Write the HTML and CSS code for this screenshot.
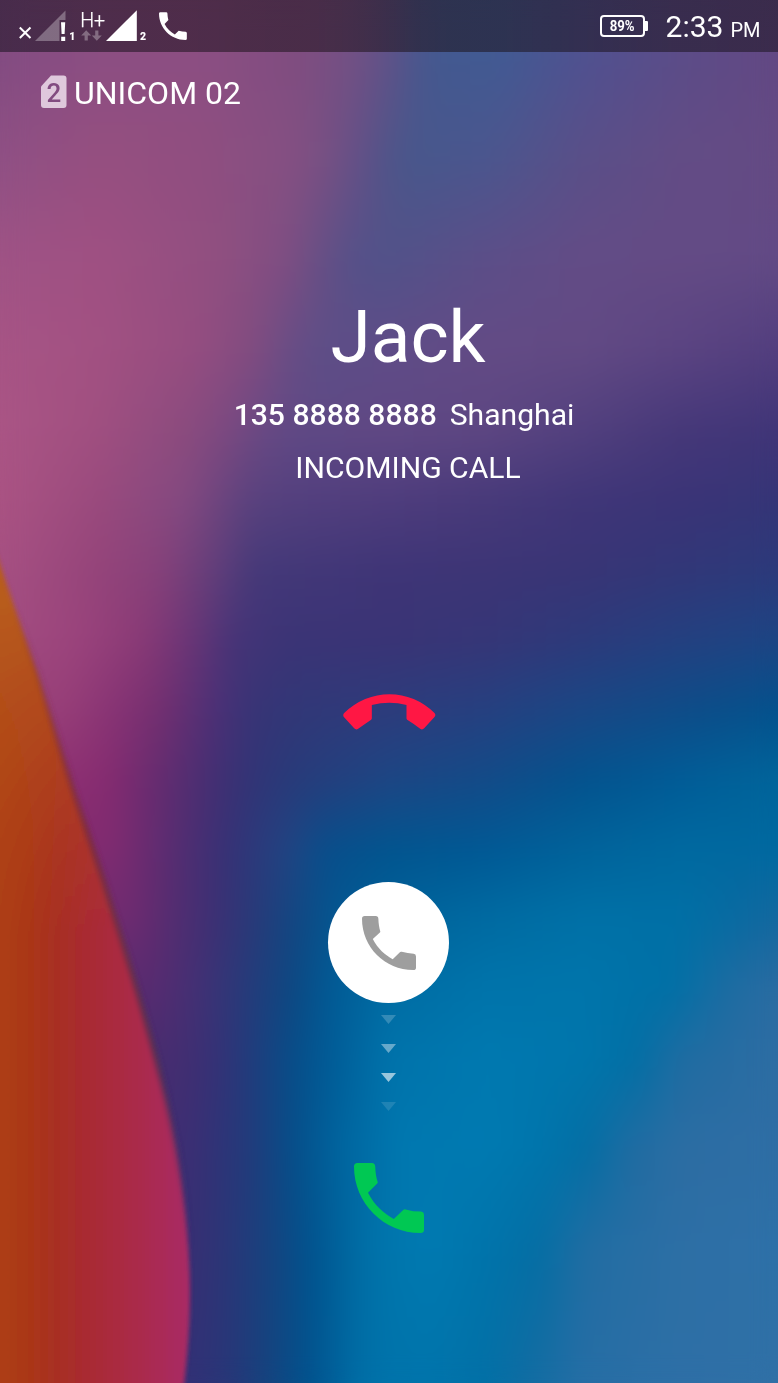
FILE: index.html
```html
<!DOCTYPE html>
<html lang="en">
<head>
<meta charset="utf-8">
<title>Incoming call</title>
<link rel="stylesheet" href="styles.css">
</head>
<body>
<main class="phone">
  <div class="wallpaper" aria-hidden="true">
    <div class="band band-1"></div>
    <div class="band band-2"></div>
    <div class="band band-3"></div>
    <div class="band band-4"></div>
    <div class="band band-5"></div>
    <div class="band band-6"></div>
    <div class="band band-7"></div>
    <div class="band band-8"></div>
    <div class="band band-9"></div>
    <div class="band band-10"></div>
    <div class="band band-11"></div>
    <div class="band band-12"></div>
    <div class="band band-13"></div>
    <div class="band band-14"></div>
    <div class="band band-15"></div>
    <div class="band band-16"></div>
    <div class="band band-17"></div>
    <div class="smooth"></div>
    <svg class="petal" viewBox="0 0 778 1383">
      <defs>
        <linearGradient id="warm" gradientUnits="userSpaceOnUse" x1="0" y1="0" x2="190" y2="0">
          <stop offset="0" stop-color="#ad3e13"/><stop offset=".16" stop-color="#aa3618"/><stop offset=".31" stop-color="#a82e24"/>
          <stop offset=".48" stop-color="#a92b34"/><stop offset=".7" stop-color="#aa2b48"/><stop offset="1" stop-color="#a92b66"/>
        </linearGradient>
        <linearGradient id="glow" gradientUnits="userSpaceOnUse" x1="0" y1="600" x2="40" y2="940">
          <stop offset="0" stop-color="#b85c1c"/><stop offset=".5" stop-color="#b4501c" stop-opacity=".5"/><stop offset="1" stop-color="#b04018" stop-opacity="0"/>
        </linearGradient>
        <linearGradient id="edge" gradientUnits="userSpaceOnUse" x1="0" y1="600" x2="0" y2="1250">
          <stop offset="0" stop-color="#7a3438" stop-opacity="0"/><stop offset=".35" stop-color="#7a2c38" stop-opacity=".65"/>
          <stop offset=".7" stop-color="#55304e" stop-opacity=".65"/><stop offset="1" stop-color="#40306a" stop-opacity="0"/>
        </linearGradient>
        <filter id="soft" x="-20%" y="-5%" width="140%" height="110%"><feGaussianBlur stdDeviation="2"/></filter>
      </defs>
      <g filter="url(#soft)">
        <path fill="url(#warm)" d="M-20 510L0 565Q15 610 37 673L72 787L103 880C125 950 150 1030 167 1103C180 1160 190 1230 190 1293Q190 1340 182 1403H-20Z"/>
        <path fill="url(#glow)" d="M-20 510L0 565Q15 610 37 673L72 787L103 880C125 950 150 1030 167 1103C180 1160 190 1230 190 1293Q190 1340 182 1403H-20Z"/>
        <path fill="none" stroke="url(#edge)" stroke-width="7" d="M0 565Q15 610 37 673L72 787L103 880C125 950 150 1030 167 1103C180 1160 190 1230 190 1293"/>
      </g>
    </svg>
  </div>

  <header class="status-bar">
    <svg class="signals" viewBox="0 0 200 52">
      <path class="cross" d="M19.8 27.5L30.5 38M30.5 27.5L19.8 38"/>
      <path class="dim" d="M35 41L65.5 10.5V20H59.5V41Z"/>
      <path class="solid" d="M61 22.3h4.2l-.6 11.7h-3zM61.2 36.8h4v4.2h-4z"/>
      <text class="slot" x="69.3" y="40.4">1</text>
      <text class="net" x="80.2" y="27.4">H+</text>
      <path class="dim" d="M86.2 30.2l5 5.2h-3.4v5.2h-3.2v-5.2h-3.4zM96.8 40.8l-5-5.2h3.4v-5.2h3.2v5.2h3.4z"/>
      <path class="solid" d="M106 41L136.8 10.3V41Z"/>
      <text class="slot" x="140" y="40.4">2</text>
      <path class="solid" transform="translate(159 12.2) scale(.174)" d="M0 8Q0 0 8 0H41Q48 0 48.5 8C49 22 51 35 54 45L32 68C47 97 68 115 91 128L113 106Q135 112 153 112Q160 113 160 120V153Q160 160 152 160C68 160 0 92 0 8Z"/>
    </svg>
    <div class="status-right">
      <div class="battery"><span class="battery-text">89%</span></div>
      <div class="clock">2:33<span class="meridiem">PM</span></div>
    </div>
  </header>

  <div class="carrier">
    <svg class="sim" viewBox="0 0 26 34"><path d="M10 .5H22.5Q25.5 .5 25.5 3.5V30Q25.5 33 22.5 33H3Q0 33 0 30V11.5Z"/><text x="13" y="27">2</text></svg>
    <span class="carrier-name">UNICOM 02</span>
  </div>

  <section class="caller">
    <h1 class="name">Jack</h1>
    <p class="number-row"><span class="number">135 8888 8888</span><span class="place">Shanghai</span></p>
    <p class="state">INCOMING CALL</p>
  </section>

  <section class="actions">
    <svg class="decline" viewBox="69 71 278 108"><path d="M72 128Q132 72 208 72Q284 72 343 128Q348 134 343 140L312 174Q306 180 300 175Q282 161 261 148Q259 147 259 144V104Q208 90 155 104V144Q155 147 153 148Q134 161 114 175Q108 180 102 174L71 140Q67 134 72 128Z"/></svg>
    <div class="handle">
      <svg class="handle-icon" viewBox="0 0 160 160"><path d="M0 8Q0 0 8 0H41Q48 0 48.5 8C49 22 51 35 54 45Q55 47 53 49L32 68C47 97 68 115 91 128L113 107Q115 105 118 106Q135 111 153 112Q160 113 160 120V153Q160 160 152 160C68 160 0 92 0 8Z"/></svg>
    </div>
    <div class="arrows">
      <i class="arrow arrow-a"></i><i class="arrow arrow-b"></i><i class="arrow arrow-c"></i><i class="arrow arrow-d"></i>
    </div>
    <svg class="answer" viewBox="0 0 160 160"><path d="M0 8Q0 0 8 0H41Q48 0 48.5 8C49 22 51 35 54 43Q55 45 53 47L32 68C47 97 68 115 91 128L113 107Q115 105 118 106Q135 111 153 111Q160 112 160 119V153Q160 160 152 160C68 160 0 92 0 8Z"/></svg>
  </section>
</main>
</body>
</html>
```

FILE: styles.css
```css
* { box-sizing: border-box; }
body { margin: 0; font-family: Roboto, sans-serif; color: #fff; }
.phone { position: relative; width: 778px; height: 1383px; overflow: hidden; isolation: isolate; }

/* Wallpaper: each band fades in over the one above it. */
.wallpaper { position: absolute; inset: 0; z-index: -1; }
.band { position: absolute; left: 0; right: 0; bottom: 0; top: var(--y); -webkit-mask-image: linear-gradient(transparent, #000 var(--h)); mask-image: linear-gradient(transparent, #000 var(--h)); }
.band-1 { top: 0; -webkit-mask-image: none; mask-image: none; background: linear-gradient(90deg, #834c82 0, #8c4e82 100px, #8c4e82 200px, #7f4d80 300px, #735084 350px, #5f5288 389px, #4b568d 415px, #435990 440px, #425a93 500px, #505190 583px, #5c4c88 680px, #634883 778px); }
.band-2 { --y: 60px; --h: 100px; background: linear-gradient(90deg, #8f5084 0, #964f80 100px, #904e80 200px, #845082 292px, #775083 325px, #625087 360px, #4f5589 389px, #48578c 415px, #4b568e 486px, #5a4f88 583px, #634c85 680px, #654b84 778px); }
.band-3 { --y: 160px; --h: 100px; background: linear-gradient(90deg, #9f5385 0, #9f5082 100px, #904f80 220px, #7f4e82 285px, #664f85 322px, #555189 355px, #525289 389px, #5c4e88 486px, #634c86 583px, #644b85 680px, #624a85 778px); }
.band-4 { --y: 260px; --h: 90px; background: linear-gradient(90deg, #a75485 0, #a25182 97px, #954d80 194px, #804c80 255px, #684d85 290px, #5d4e87 325px, #5f4c87 389px, #634b85 486px, #624a84 583px, #5b4482 680px, #523e7e 778px); }
.band-5 { --y: 350px; --h: 80px; background: linear-gradient(90deg, #aa5585 0, #a04f80 97px, #8b4b7e 185px, #7c4980 225px, #674984 265px, #5f4985 300px, #604884 389px, #5d4682 486px, #52407e 583px, #463879 680px, #403578 778px); }
.band-6 { --y: 430px; --h: 70px; background: linear-gradient(90deg, #aa5383 0, #9a4a7d 97px, #834980 185px, #70457e 215px, #5a427e 250px, #54407e 292px, #4f3d7d 389px, #483a7a 486px, #403678 583px, #3b3477 680px, #353577 778px); }
.band-7 { --y: 500px; --h: 70px; background: linear-gradient(90deg, #a65082 0, #95447a 97px, #86417a 160px, #623e7a 215px, #453979 255px, #3f3577 389px, #3d3576 486px, #393576 583px, #323778 680px, #2c3a7b 778px); }
.band-8 { --y: 570px; --h: 70px; background: linear-gradient(90deg, #a34d80 0, #9a437c 80px, #8a3a76 140px, #6e3576 185px, #453477 235px, #3b3476 292px, #3a3476 389px, #363677 486px, #2d3a7b 583px, #244080 680px, #1d4584 778px); }
.band-9 { --y: 640px; --h: 70px; background: linear-gradient(90deg, #983f78 60px, #873374 115px, #732f70 160px, #4c3076 215px, #383476 252px, #323777 292px, #2d3c7c 389px, #264080 486px, #1a4785 583px, #0f4c88 680px, #04528d 778px); }
.band-10 { --y: 710px; --h: 70px; background: linear-gradient(90deg, #8c2f72 80px, #842b70 110px, #642c70 160px, #432f73 215px, #323476 250px, #283b7a 292px, #1d4684 389px, #134b88 486px, #04538e 583px, #015c97 680px, #01659b 778px); }
.band-11 { --y: 780px; --h: 70px; background: linear-gradient(90deg, #812b70 110px, #6d2b70 140px, #4c2e72 190px, #353276 230px, #1f4583 292px, #094e8b 324px, #02558f 389px, #015995 486px, #01639b 583px, #0069a0 680px, #0069a0 778px); }
.band-12 { --y: 850px; --h: 70px; background: linear-gradient(90deg, #6f2b70 130px, #5b2c70 160px, #3c3074 215px, #253c7a 260px, #104984 300px, #035892 340px, #00639b 400px, #006ba2 486px, #0071a7 583px, #0070a6 680px, #0a6aa1 740px, #16689f 778px); }
.band-13 { --y: 920px; --h: 70px; background: linear-gradient(90deg, #582b70 150px, #443074 194px, #2a3979 240px, #0d4882 292px, #025a95 330px, #016da4 389px, #0074ab 486px, #0075ab 583px, #0070a6 670px, #1c6ca2 725px, #2c6ca2 778px); }
.band-14 { --y: 990px; --h: 70px; background: linear-gradient(90deg, #472d70 170px, #363176 215px, #213c7c 250px, #084d88 292px, #015c97 330px, #0073ab 389px, #0079b0 486px, #0076ac 583px, #026fa5 635px, #206ca2 682px, #2e6da3 778px); }
.band-15 { --y: 1060px; --h: 90px; background: linear-gradient(90deg, #3e2e73 185px, #303377 215px, #223b7b 250px, #064e89 292px, #00659f 340px, #0078b0 400px, #007ab1 486px, #0075ac 540px, #046ea4 588px, #1f6ca2 630px, #2c6da3 680px, #2f6ea5 778px); }
.band-16 { --y: 1150px; --h: 100px; background: linear-gradient(90deg, #382f73 190px, #293778 230px, #16437f 270px, #01538e 310px, #006da5 360px, #0076ad 389px, #007ab1 430px, #0074ab 486px, #056ea4 540px, #226da3 588px, #2d6fa5 680px, #2e71a8 778px); }
.band-17 { --y: 1250px; --h: 133px; background: linear-gradient(90deg, #323176 190px, #273778 230px, #14447f 270px, #01538e 310px, #006ea6 360px, #0073aa 389px, #0074ab 430px, #0270a6 486px, #126ca2 530px, #266ea5 583px, #2e6fa6 680px, #3070a6 778px); }
.smooth { position: absolute; inset: 0; backdrop-filter: blur(12px); }
.petal { position: absolute; inset: 0; width: 778px; height: 1383px; }

.status-bar { display: flex; justify-content: space-between; height: 52px; background: linear-gradient(90deg, rgba(20, 16, 28, .53), rgba(28, 16, 22, .53) 50%, rgba(24, 18, 28, .53)); }
.signals { display: block; width: 200px; height: 52px; }
.cross { fill: none; stroke: #fff; stroke-width: 2; }
.solid { fill: #fff; }
.dim { fill: #fff; opacity: .3; }
.slot { font: 900 10.5px Roboto, sans-serif; fill: #fff; }
.net { font: 300 19.5px Roboto, sans-serif; fill: #fff; stroke: #fff; stroke-width: .25px; }
.status-right { display: flex; align-items: center; padding-right: 17.5px; }
.battery { position: relative; display: flex; align-items: center; justify-content: center; width: 45px; height: 22px; border: 2px solid #fff; border-radius: 4px; margin-right: 21px; }
.battery::after { content: ""; position: absolute; right: -5px; top: 4px; width: 3px; height: 10px; background: #fff; border-radius: 0 1px 1px 0; }
.battery-text { font-size: 15px; font-weight: 700; line-height: 18px; transform: scaleX(.88); }
.clock { display: flex; align-items: baseline; font-size: 30px; line-height: 50px; padding-top: 4px; }
.meridiem { font-size: 20px; margin-left: 7px; }

.carrier { display: flex; align-items: center; height: 36px; margin: 23px 0 0 41px; }
.sim { width: 26px; height: 34px; margin: 0 7px 3px 0; }
.sim path { fill: #dfc8dc; }
.sim text { font: 500 26px Roboto, sans-serif; text-anchor: middle; fill: #824b80; }
.carrier-name { font-size: 32px; line-height: 36px; }

.caller { display: flex; flex-direction: column; align-items: center; margin-top: 186px; padding-left: 38px; }
.name { margin: 0; font-size: 73px; font-weight: 400; line-height: 80px; }
.number-row { display: flex; margin: 18px 8px 0 0; font-size: 30.1px; line-height: 40px; }
.number { font-weight: 500; }
.place { margin-left: 13px; }
.state { margin: 13px 0 0; font-size: 30.1px; line-height: 40px; }

.actions { display: flex; flex-direction: column; align-items: center; }
.decline { width: 93px; height: 36px; margin-top: 206px; fill: #ff1744; }
.handle { display: flex; align-items: center; justify-content: center; width: 121px; height: 121px; margin: 152px 1px 0 0; border-radius: 50%; background: #fff; }
.handle-icon { width: 54px; height: 54px; fill: #9e9e9e; }
.arrows { display: flex; flex-direction: column; gap: 20px; margin: 12px 1px 0 0; }
.arrow { width: 15px; height: 9px; background: #fff; clip-path: polygon(0 0, 100% 0, 50% 100%); }
.arrow-a { opacity: .2; }
.arrow-b { opacity: .4; }
.arrow-c { opacity: .6; }
.arrow-d { opacity: .12; }
.answer { width: 70px; height: 70px; margin-top: 52px; fill: #00c853; }
```
